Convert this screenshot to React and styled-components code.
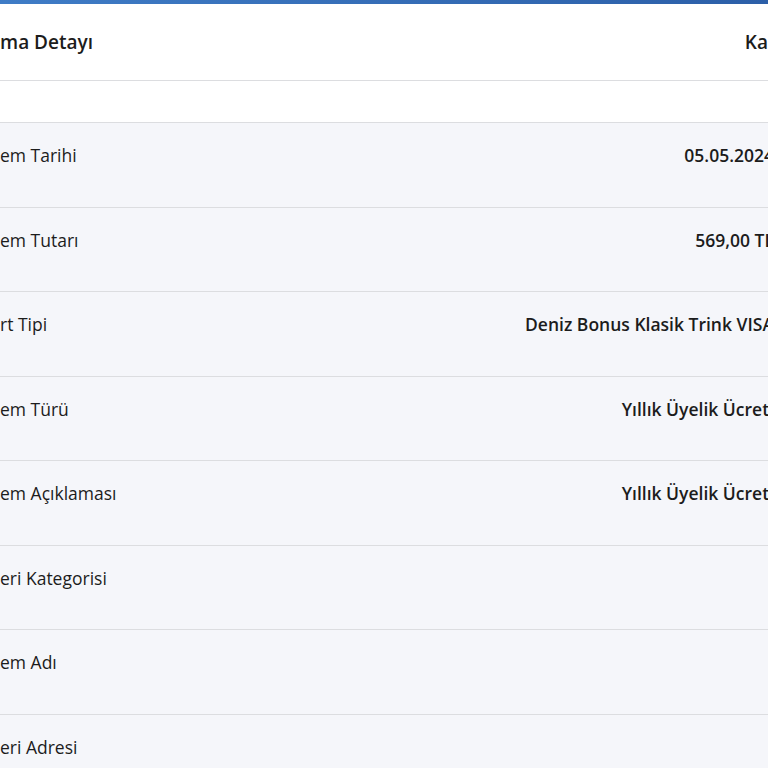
import React from 'react';
import styled, { createGlobalStyle } from 'styled-components';

const Global = createGlobalStyle`
  body { margin: 0; font-family: "Open Sans", sans-serif; color: #1c1c1c; background: #fff; overflow: hidden; }
`;

const TopBar = styled.div`
  height: 4px;
  background: linear-gradient(90deg, #3f7cc6, #2c5fa8);
`;

const Header = styled.div`
  height: 76px;
  display: flex;
  align-items: center;
  justify-content: space-between;
  border-bottom: 1px solid #dcdde0;
  font-size: 19px;
  font-weight: 600;
`;

const Spacer = styled.div`
  height: 41px;
  border-bottom: 1px solid #dcdde0;
`;

const List = styled.div`
  width: calc(100% + 6px);
  background: #f5f6fa;
`;

const Row = styled.div`
  height: 84.5px;
  box-sizing: border-box;
  padding-top: 20px;
  display: flex;
  justify-content: space-between;
  border-bottom: 1px solid #dcdde0;
  font-size: 17.5px;
  line-height: 24px;
`;

const Value = styled.span`
  font-weight: 600;
  white-space: nowrap;
`;

const rows = [
  ['em Tarihi', '05.05.2024'],
  ['em Tutarı', '569,00 TL'],
  ['rt Tipi', 'Deniz Bonus Klasik Trink VISA'],
  ['em Türü', 'Yıllık Üyelik Ücreti'],
  ['em Açıklaması', 'Yıllık Üyelik Ücreti'],
  ['eri Kategorisi', ''],
  ['em Adı', ''],
  ['eri Adresi', ''],
];

export default function App() {
  return (
    <>
      <Global />
      <TopBar />
      <Header>
        <span>ma Detayı</span>
        <span>Ka</span>
      </Header>
      <Spacer />
      <List>
        {rows.map(([l, v]) => (
          <Row key={l}>
            <span>{l}</span>
            <Value>{v}</Value>
          </Row>
        ))}
      </List>
    </>
  );
}
